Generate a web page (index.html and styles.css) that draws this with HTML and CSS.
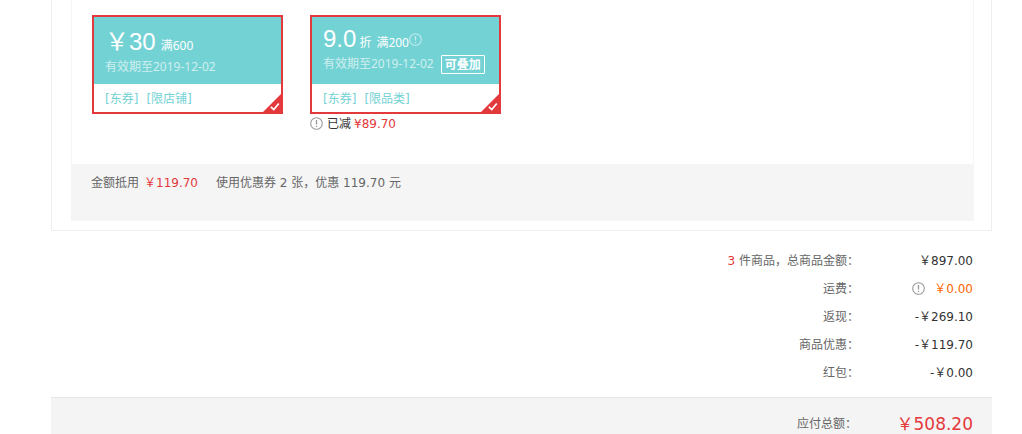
FILE: index.html
```html
<!DOCTYPE html>
<html lang="zh-CN">
<head>
<meta charset="utf-8">
<title>订单结算</title>
<link rel="stylesheet" href="styles.css">
</head>
<body>
<svg class="defs" aria-hidden="true">
  <symbol id="info" viewBox="0 0 14 14">
    <circle cx="6.5" cy="6.5" r="5.8" fill="none" stroke="currentColor" stroke-width="1.1"/>
    <path d="M6.5 3v4.6M6.5 8.7v1.3" stroke="currentColor" stroke-width="1.3"/>
  </symbol>
  <symbol id="corner" viewBox="0 0 20 20">
    <path d="M20 0v20H0z" fill="#e4393c"/>
    <path d="M8.8 13.8l3 2.8 5-6.1" fill="none" stroke="#fff" stroke-width="1.7"/>
  </symbol>
</svg>
<main class="page">
  <section class="order">
    <div class="panel">
      <ul class="coupons">
        <li class="item">
          <div class="coupon">
            <div class="top cash">
              <div class="price"><span class="amount">￥30</span><span class="limit">满600</span></div>
              <div class="valid"><span>有效期至2019-12-02</span></div>
            </div>
            <div class="scope"><span>[东券]</span><span>[限店铺]</span></div>
            <svg class="corner"><use href="#corner"/></svg>
          </div>
        </li>
        <li class="item">
          <div class="coupon">
            <div class="top discount">
              <div class="price"><span class="amount">9.0</span><span class="unit">折</span><span class="limit">满200</span><svg class="info faint"><use href="#info"/></svg></div>
              <div class="valid"><span>有效期至2019-12-02</span><b class="tag">可叠加</b></div>
            </div>
            <div class="scope"><span>[东券]</span><span>[限品类]</span></div>
            <svg class="corner"><use href="#corner"/></svg>
          </div>
          <div class="saved"><svg class="info"><use href="#info"/></svg><span>已减</span><span class="red">¥89.70</span></div>
        </li>
      </ul>
      <div class="used">
        <span>金额抵用</span><span class="used-sum">￥119.70</span><span>使用优惠券 2 张，优惠 119.70 元</span>
      </div>
    </div>
  </section>
  <dl class="summary">
    <div class="row"><dt><span class="count">3</span> 件商品，总商品金额：</dt><dd>￥897.00</dd></div>
    <div class="row"><dt>运费：</dt><dd class="orange"><svg class="info"><use href="#info"/></svg>￥0.00</dd></div>
    <div class="row"><dt>返现：</dt><dd>-￥269.10</dd></div>
    <div class="row"><dt>商品优惠：</dt><dd>-￥119.70</dd></div>
    <div class="row"><dt>红包：</dt><dd>-￥0.00</dd></div>
  </dl>
  <div class="total"><span>应付总额：</span><strong>￥508.20</strong></div>
</main>
</body>
</html>
```

FILE: styles.css
```css
* { box-sizing: border-box; }
body {
  margin: 0;
  background: #fff;
  color: #666;
  font: 12px/20px "DejaVu Sans", "Noto Sans CJK SC", sans-serif;
}
ul, dl, dd { margin: 0; padding: 0; list-style: none; }
.defs { position: absolute; width: 0; height: 0; }
.page { padding: 0 30px 0 51px; }
.order {
  border: solid #eee;
  border-width: 0 1px 1px;
  padding: 0 17px 9px 19px;
}
.panel { border: solid #f5f5f5; border-width: 0 1px; }
.coupons {
  display: flex;
  flex-wrap: wrap;
  gap: 27px;
  padding: 15px 20px 30px;
}
.coupon {
  position: relative;
  width: 191px;
  border: 2px solid #e4393c;
  font-family: "Noto Sans", "Noto Sans CJK SC", sans-serif;
}
.top {
  padding: 7px 0 0 11px;
  height: 67px;
  background: #73d2d4;
  color: #fff;
}
.cash { padding-top: 10px; }
.price { display: flex; align-items: baseline; height: 30px; line-height: 30px; }
.amount { font: 24px/30px "Liberation Sans", "Noto Sans CJK SC", sans-serif; }
.unit { margin-left: 3px; }
.limit { margin-left: 5px; }
.valid { display: flex; align-items: center; gap: 7px; line-height: 20px; }
.valid span { opacity: .65; }
.tag {
  border: 1px solid #fff;
  border-radius: 1px;
  padding: 0 3px;
  line-height: 17px;
}
.scope {
  display: flex;
  gap: 8px;
  padding: 5px 0 3px 11px;
  font-family: "DejaVu Sans", "Noto Sans CJK SC", sans-serif;
  color: #73d2d4;
}
.corner { position: absolute; right: -1px; bottom: -1px; width: 20px; height: 20px; }
.info { width: 14px; height: 14px; color: #999; flex: none; }
.faint { align-self: center; margin-top: 2px; color: #c4ecee; }
.saved { display: flex; align-items: center; gap: 3px; color: #333; }
.red { color: #e4393c; }
.used {
  display: flex;
  padding: 9px 19px 28px;
  background: #f5f5f5;
}
.used-sum { margin: 0 18px 0 5px; color: #e4393c; }
.summary { padding: 20px 19px 6px 0; }
.row { display: flex; justify-content: flex-end; line-height: 20px; padding-bottom: 8px; }
.row dd { display: flex; justify-content: flex-end; align-items: center; width: 114px; color: #333; }
.row .orange { gap: 8px; color: #f60; }
.count { color: #e4393c; }
.total {
  display: flex;
  justify-content: flex-end;
  padding: 16px 19px 0 0;
  border-top: 1px solid #e5e5e5;
  background: #f4f4f4;
}
.total strong { width: 116px; text-align: right; font-size: 17px; font-weight: 400; color: #e4393c; }
```
